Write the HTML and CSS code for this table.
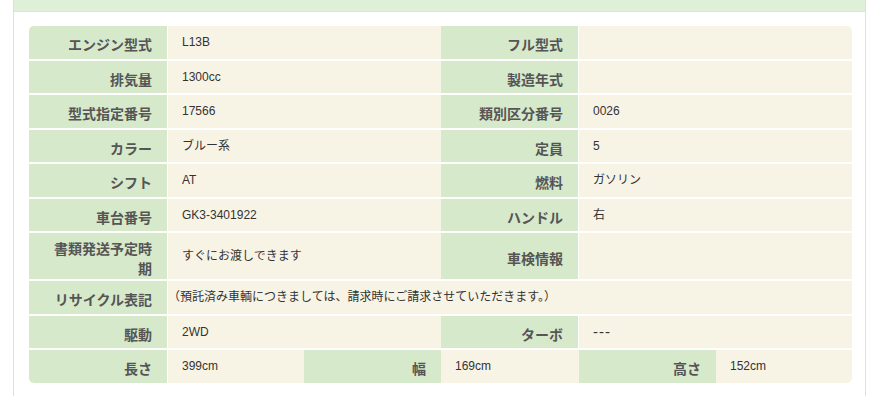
FILE: index.html
```html
<!DOCTYPE html>
<html lang="ja">
<head>
<meta charset="utf-8">
<title>車両情報</title>
<link rel="stylesheet" href="styles.css">
</head>
<body>
<div class="panel">
  <div class="panel-heading"></div>
  <div class="panel-body">
    <div class="spec">
      <div class="th">エンジン型式</div><div class="td w2">L13B</div><div class="th">フル型式</div><div class="td w2"></div>
      <div class="th">排気量</div><div class="td w2">1300cc</div><div class="th">製造年式</div><div class="td w2"></div>
      <div class="th">型式指定番号</div><div class="td w2">17566</div><div class="th">類別区分番号</div><div class="td w2">0026</div>
      <div class="th">カラー</div><div class="td w2">ブルー系</div><div class="th">定員</div><div class="td w2">5</div>
      <div class="th">シフト</div><div class="td w2">AT</div><div class="th">燃料</div><div class="td w2">ガソリン</div>
      <div class="th">車台番号</div><div class="td w2">GK3-3401922</div><div class="th">ハンドル</div><div class="td w2">右</div>
      <div class="th">書類発送予定時期</div><div class="td w2">すぐにお渡しできます</div><div class="th">車検情報</div><div class="td w2"></div>
      <div class="th">リサイクル表記</div><div class="td w5 note">（預託済み車輌につきましては、請求時にご請求させていただきます。）</div>
      <div class="th">駆動</div><div class="td w2">2WD</div><div class="th">ターボ</div><div class="td w2 dash">---</div>
      <div class="th">長さ</div><div class="td">399cm</div><div class="th nb">幅</div><div class="td">169cm</div><div class="th nb">高さ</div><div class="td">152cm</div>
    </div>
  </div>
</div>
</body>
</html>
```
FILE: styles.css
```css
body {
  margin: 0;
  background: #fff;
  font-family: "Liberation Sans", "Noto Sans CJK JP", sans-serif;
}
.panel {
  margin-left: 13px;
  width: 851px;
  border: 1px solid #d6e9c6;
  border-top: 0;
}
.panel-heading {
  height: 11px;
  background: #dff0d8;
  border-bottom: 1px solid #d6e9c6;
}
.panel-body {
  padding: 14px 0 20px 15px;
}
.spec {
  display: grid;
  width: 823px;
  grid-template-columns: 139px 136px 137px 138px 137px 136px;
  grid-auto-rows: minmax(32.5px, auto);
  row-gap: 2px;
  border-radius: 5px;
  overflow: hidden;
}
.th {
  background: #d6e9cb;
  border-right: 1px solid #fff;
  color: #555;
  font-weight: bold;
  font-size: 14px;
  line-height: 20px;
  text-align: right;
  padding: 6px 15px 0 22px;
  display: flex;
  align-items: center;
  justify-content: flex-end;
}
.th.nb {
  border-right: 0;
}
.td {
  background: #f7f4e6;
  color: #333;
  font-size: 12px;
  line-height: 16px;
  padding: 0 14px;
  display: flex;
  align-items: center;
}
.w2 {
  grid-column: span 2;
}
.w5 {
  grid-column: span 5;
}
.note {
  padding-left: 0;
}
.dash {
  font-size: 15px;
  letter-spacing: 1px;
}
```
